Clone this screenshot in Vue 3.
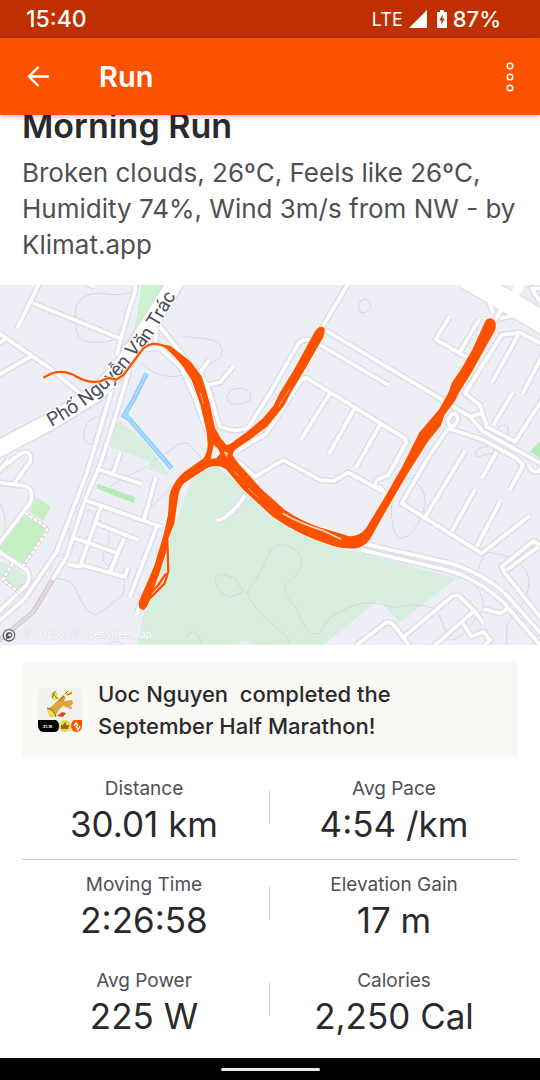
<template>
  <div class="screen">
    <div class="status-bar">
      <span class="clock">15:40</span>
      <span class="network">LTE</span>
      <svg class="signal" viewBox="0 0 18 18" aria-hidden="true">
        <path d="M18 0V18H0Z" fill="#fff" />
      </svg>
      <svg class="battery" viewBox="0 0 10 18" aria-hidden="true">
        <path d="M3 0H7V2H10V18H0V2H3Z" fill="#fff" />
        <path d="M5.500 4L2.500 10.500H4.500V15L7.500 8.500H5.500Z" fill="#bf2f00" />
      </svg>
      <span class="percent">87%</span>
    </div>

    <header class="app-bar">
      <button class="icon-btn" type="button" aria-label="Back">
        <svg width="24" height="24" viewBox="0 0 24 24" fill="none" stroke="#fff" stroke-width="2.400">
          <path d="M12.500 2L3 11.500L12.500 21M3.500 11.500H23" />
        </svg>
      </button>
      <h1 class="bar-title">Run</h1>
      <button class="icon-btn" type="button" aria-label="More options">
        <svg width="10" height="32" viewBox="0 0 10 32" fill="none" stroke="#fff" stroke-width="1.500">
          <circle v-for="cy in [5, 16, 27]" :key="cy" cx="5" :cy="cy" r="2.800" />
        </svg>
      </button>
    </header>

    <main class="content">
      <section class="summary">
        <h2 class="title">Morning Run</h2>
        <p class="description">
          Broken clouds, 26ºC, Feels like 26ºC, Humidity 74%, Wind 3m/s from NW - by Klimat.app
        </p>
      </section>

      <svg class="map" viewBox="0 0 1620 1080" role="img" aria-label="Route map">
        <rect width="1620" height="1080" fill="#eeeef6" />

        <!-- parks and lawns -->
        <path d="M575 585L640 538L700 585L810 700L1010 787L1370 880L1200 1012L1135 945L970 1080H410L440 950L530 700Z" fill="#d7eedf" />
        <path d="M680 1080L735 1067L775 1080Z" fill="#eeeef6" />
        <path d="M350 405L420 455L450 490L510 572L445 553L450 528L330 485Z" fill="#d7eedf" />
        <path d="M-5 825L38 842L80 875L50 925L8 885L-5 880Z" fill="#d7eedf" />
        <path d="M425 0H488L430 115L405 125Z" fill="#cdf2d2" />
        <path d="M110 637L152 665L130 708L88 680Z M70 688L140 730L68 848L-5 795Z" fill="#c3f1c4" />
        <path d="M293 596L406 637L401 655L289 610Z M1620 468L1590 500L1620 520Z" fill="#b4ecb6" />

        <!-- contour lines -->
        <g class="contour">
          <path v-for="d in contours" :key="d" :d="d" />
        </g>

        <g class="road-casing">
          <path v-for="d in roads" :key="d" :d="d" />
        </g>
        <path d="M-20 500L150 410L290 325L360 250L440 130L540 -30" stroke="#dcdde9" stroke-width="58" fill="none" />
        <path d="M1400 -22L1660 130" stroke="#dcdde9" stroke-width="74" fill="none" />
        <g class="road-fill">
          <path v-for="d in roads" :key="d" :d="d" />
        </g>
        <path d="M-20 500L150 410L290 325L360 250L440 130L540 -30" stroke="#fff" stroke-width="48" fill="none" />
        <path d="M1400 -22L1660 130" stroke="#fff" stroke-width="66" fill="none" />
        <path d="M1565 -10L1535 50" stroke="#fff" stroke-width="26" fill="none" />

        <!-- footpaths -->
        <path class="footpath-base" :d="footpath" />
        <path class="footpath-dash" :d="footpath" />
        <path d="M157 885L100 980L-10 1072" stroke="#c9bfc6" stroke-width="14" fill="none" />
        <path d="M157 885L100 980L-10 1072" stroke="#e5dad9" stroke-width="9" fill="none" />

        <!-- canal -->
        <path d="M440 265L400 345L372 392L388 402L515 550" stroke="#85c8f7" stroke-width="14" fill="none" />
        <path d="M440 265L400 345L372 392L388 402L515 550" stroke="#a4d9ff" stroke-width="8" fill="none" />
        <path d="M365 392L386 382L388 402Z" fill="#a4d9ff" />

        <path id="street-line" d="M154 426Q294 350 374 254L456 155L560 -20" fill="none" />
        <text class="street-name"><textPath href="#street-line">Phố Nguyễn Văn Trác</textPath></text>

        <!-- recorded track -->
        <path class="track-halo" :d="track" />
        <path class="loop-halo" :d="loops" />
        <path class="track" :d="track" />
        <path class="loop" :d="loops" />
        <path class="track-gap" d="M850 686Q900 715 970 737L1022 762" stroke-width="5" />
        <path class="track-gap" d="M702 560L718 574M745 610L775 638M602 325L610 355M836 366Q842 350 870 312" stroke-width="2" />
        <path d="M641 480L652 488L661 505L650 519L632 522Z" fill="#eef1ee" />
        <path d="M671 500L684 503L681 517Z" fill="#f8d8c5" />

        <!-- attribution -->
        <circle cx="27" cy="1051" r="17" fill="#fff" stroke="#63656b" stroke-width="4" />
        <path d="M19 1062Q12 1040 29 1041Q39 1043 37 1053Q33 1062 19 1062Z" fill="#5c5e63" />
        <circle cx="29" cy="1050" r="4" fill="#fff" />
        <text class="attribution" x="68" y="1060">© Mapbox © OpenStreetMap</text>
      </svg>

      <section class="details">
        <a class="achievement" href="#">
          <svg class="badge" viewBox="0 0 44 44" aria-hidden="true">
            <rect width="44" height="44" rx="5" fill="#f2f1ec" />
            <path d="M9 21L14 18L20 12L25 7L28 9L26 13L34 12L35 15L31 20L25 18L21 22L17 28L12 29Z" fill="#dda43b" />
            <path d="M9 21Q15 22 18 29L11 28Z M14 5L17 3L19 5L20 11L15 12L13 8Z M27 4L34 3V6L29 8Z" fill="#e9dd48" />
            <path d="M9 20Q16 21 18 29M14 5L20 11M17 3L14 10M21 13L26 8M27 6L30 3M29 7L34 5" stroke="#8a7029" stroke-width="1" fill="none" />
            <path d="M19 28L24 24L28 25L25 29Z M31 21L34 18L33 21Z" fill="#d94a22" />
            <path d="M0 32H18Q21 34 21 38Q21 44 16 44H5Q0 43 0 37Z" fill="#000" />
            <text class="badge-text" x="5" y="40">21.1k</text>
            <circle cx="27" cy="38" r="6" fill="#ead84c" />
            <path d="M23 37H25L27 34L28 35V37H31L30 41H23Z" fill="#9b6910" />
            <path d="M36 32H44V38A5.500 6 0 0 1 33 38Q33 34 36 32Z" fill="#fc5200" />
            <path d="M36 38L38 35L40 38M38 38L40 42L42 38" stroke="#fff" stroke-width="1.400" fill="none" />
          </svg>
          <span class="achievement-text">Uoc Nguyen&nbsp; completed the September Half Marathon!</span>
        </a>

        <dl class="stats">
          <div v-for="stat in stats" :key="stat.label" class="stat">
            <dt>{{ stat.label }}</dt>
            <dd>{{ stat.value }}</dd>
          </div>
        </dl>
      </section>
    </main>

    <footer class="nav-bar">
      <span class="nav-handle"></span>
    </footer>
  </div>
</template>

<script setup>
const stats = [
  { label: 'Distance', value: '30.01 km' },
  { label: 'Avg Pace', value: '4:54 /km' },
  { label: 'Moving Time', value: '2:26:58' },
  { label: 'Elevation Gain', value: '17 m' },
  { label: 'Avg Power', value: '225 W' },
  { label: 'Calories', value: '2,250 Cal' },
];

// every street is drawn twice: a wide casing, then the white surface
const roads = [
  // north west
  'M120 -10L52 130',
  'M250 -10L285 5',
  'M95 53L360 160',
  'M405 -15V20L385 80L350 210',
  'M-10 140L150 250L240 325',
  'M-10 273L95 213',
  'M-10 178L20 160',
  'M335 315L262 560L170 800L75 940L-10 1015',
  'M388 255L345 400L300 540L255 645L200 815L157 885',
  'M-10 560L60 507Q98 490 90 530L40 600',
  'M-10 592L75 603Q105 615 90 655L-10 785',
  'M-10 565L25 525',
  'M-10 795L80 855Q95 875 80 900L-10 985',
  // blocks in the south west
  'M295 553L425 597',
  'M360 503L340 565',
  'M255 645L487 727',
  'M468 577L432 703',
  'M303 665L285 715L240 845L206 838',
  'M290 715L415 765',
  'M215 757L350 803',
  'M372 760L330 860',
  'M245 840L375 876L383 850',
  'M470 725L390 935',
  'M428 925L410 990',
  // centre
  'M480 125L600 275',
  'M470 130L465 175',
  'M430 190L480 190L545 250L585 340L625 450',
  'M628 225L600 262',
  'M700 245L660 292L615 302',
  'M600 262L628 320L660 425Q710 445 745 428L810 325L895 175Q910 160 935 165L1165 300',
  'M690 540L700 505L800 445L900 290Q910 275 925 282L1215 460Q1222 470 1215 480L1165 570L1130 585L1122 605',
  'M690 510L765 575L850 525L960 585L1000 588L1045 563L1150 620',
  'M1120 608L1140 607L1150 620',
  'M988 328L902 465',
  'M1062 373L988 505',
  'M1140 420L1068 547',
  'M1045 -5L965 130',
  'M650 707Q690 700 735 630',
  // north east
  'M975 135L1320 340L1410 395L1450 440L1640 545',
  'M1350 93L1307 163L1400 217',
  'M1438 103L1380 200',
  'M1465 45L1480 85',
  'M1505 70L1475 125',
  'M1550 90L1500 100',
  'M1640 185L1560 143L1505 150L1395 325L1440 360L1460 425L1545 470L1630 340',
  'M1555 150L1475 293',
  'M1630 205L1567 327',
  'M1540 320L1480 420',
  'M1410 395L1445 385',
  'M1620 10H1595L1620 50',
  'M1348 420A11 17 20 1 0 1370 390A11 17 20 1 0 1348 420',
  'M1345 430L1450 465L1550 520L1570 540L1530 613',
  'M1590 545A16 16 0 1 0 1625 540',
  'M1345 430L1280 525L1205 655L1445 805L1588 693',
  'M1395 498L1275 697',
  'M1490 500L1445 580',
  'M1425 613L1355 740',
  'M1502 647L1430 785',
  // south east
  'M1085 775L1350 835Q1450 865 1520 930L1640 1065',
  'M1085 795L1340 855Q1430 880 1510 952L1620 1080',
  'M1620 780L1600 768L1505 845L1515 865L1640 1020',
  'M1520 855L1615 785',
  'M1450 972L1500 985L1525 970',
  'M1210 1057L1355 935Q1372 925 1385 940L1425 980L1450 1015',
  'M1385 1010L1415 1055L1450 1040L1470 1065L1450 1085',
  'M1420 980L1300 1085',
  'M1070 1080L1155 1015Q1168 1008 1180 1018L1230 1085',
];

const contours = [
  'M400 20Q350 35 310 25Q250 20 230 60Q220 110 235 155Q255 180 320 170L360 160',
  'M420 230Q460 275 520 275Q580 270 660 220Q685 170 610 160L550 155',
  'M680 335Q690 305 730 310Q760 320 750 345Q720 365 690 355Z',
  'M250 450Q255 405 290 395Q320 400 305 450Q290 480 265 478Q250 465 250 450Z',
  'M330 605L370 580L440 545M460 530L540 475H565L615 530M440 680L500 620L525 605',
  'M1075 65Q1080 42 1095 42Q1115 45 1110 70Q1095 88 1082 82Z',
  'M210 680L270 675L325 730Q335 770 310 800Q300 835 340 850M150 860L160 820L210 800L205 680',
  'M160 880Q220 880 230 920Q260 990 290 990L370 930L375 880',
  'M645 880Q650 865 670 868L705 880L730 920L695 935Q650 930 645 880Z',
  'M810 795Q790 860 740 922Q760 970 810 1010L865 1060L870 1080',
  'M810 795Q850 760 890 800Q930 840 860 895Q840 920 890 970Q920 1060 960 1045Q980 990 1050 965Q1110 940 1180 968Q1250 950 1300 970Q1330 1000 1340 1060Q1370 1080 1420 1010L1450 970Q1450 930 1430 910Q1430 820 1465 802Q1550 810 1580 860Q1600 900 1565 960L1520 1020V1080',
  'M560 1060Q565 1035 585 1042Q605 1055 600 1080M325 1080Q345 1055 370 1080',
  'M1175 660Q1200 560 1240 585Q1290 620 1270 680Q1240 760 1200 760Q1170 740 1175 660Z',
  'M1425 500Q1440 480 1480 485L1510 490Q1490 505 1450 510Q1430 525 1425 500ZM1485 440Q1500 410 1525 425L1525 460',
  'M0 655Q20 690 15 730M1255 485Q1290 475 1270 510',
];

const footpath = 'M75 683L140 728Q145 740 130 755L68 845M38 835L8 885L60 925';

// outline of the overlapping laps, starting at the north-west corner
const track = [
  'M495 183L530 217L553 245L578 285L603 355L623 440L626 480Q625 505 612 523',
  'L570 552Q540 570 524 600Q511 620 510 645L507 690L495 745L465 845L420 950Q416 970 430 972',
  'L440 960L475 865L497 795L502 760L520 715L530 645Q533 610 550 592L605 556Q645 528 680 550',
  'L730 610L820 693Q900 750 1000 780Q1035 790 1070 787Q1092 782 1107 762',
  'L1150 685L1220 565L1280 470L1320 420L1330 390L1363 345L1375 320L1410 265L1482 135',
  'Q1490 108 1472 103Q1460 102 1454 120L1420 195L1385 255L1358 295L1350 320L1320 375L1260 445',
  'L1210 545L1150 650L1098 735Q1080 757 1050 757L960 730Q900 710 850 675L780 612',
  'L715 540L695 512Q695 495 712 486L750 460L800 422L830 385L850 360L868 325L910 255L967 155',
  'Q974 135 970 130Q958 124 945 145L885 255L842 325L822 365L790 403L740 445L705 470',
  'Q690 482 678 483L660 462L642 430L626 355L612 305L602 275L570 232L510 185Z',
].join('');

const loops = 'M133 277Q180 245 230 275Q265 295 300 289L325 279L350 284L370 270L430 190Q460 165 500 187M502 765L505 860L494 895L435 955M496 868L475 900L433 945';
</script>

<style>
body {
  margin: 0;
  background: #fff;
}
</style>

<style scoped>
.screen {
  display: flex;
  flex-direction: column;
  min-height: 100vh;
  background: #fff;
  color: #2a2a2c;
  font-family: Inter, "Liberation Sans", sans-serif;
}

.status-bar {
  display: flex;
  align-items: center;
  height: 38px;
  padding: 0 39px 0 26px;
  background: #bf2f00;
  color: #fff;
}
.clock {
  flex: 1;
  font-size: 23px;
  font-weight: 500;
}
.network { font-size: 18px; }
.signal {
  width: 18px;
  height: 18px;
  margin-left: 6px;
}
.battery {
  width: 10px;
  height: 18px;
  margin: 0 6px 0 10px;
}
.percent {
  font-size: 22px;
  font-weight: 500;
}

.app-bar {
  position: relative;
  z-index: 1;
  display: flex;
  align-items: center;
  height: 77px;
  padding: 0 20px 0 16px;
  background: #fc5200;
  color: #fff;
  box-shadow: 0 1px 5px rgba(0, 0, 0, 0.3);
}
.icon-btn {
  display: flex;
  padding: 10px;
  border: 0;
  background: none;
  cursor: pointer;
}
.icon-btn:last-child { padding: 10px 5px; }
.bar-title {
  flex: 1;
  margin: 0 0 0 39px;
  font-size: 29px;
  font-weight: 600;
}

.content {
  flex: 1;
  overflow: hidden;
}
.summary { padding: 0 22px 22px; }
.title {
  margin: -9px 0 9px;
  font-size: 34px;
  font-weight: 600;
  line-height: 40px;
}
.description {
  margin: 0;
  color: #505052;
  font-size: 26px;
  line-height: 36px;
}

.map {
  display: block;
  width: 100%;
}
.contour {
  fill: none;
  stroke: #c9cfd3;
  stroke-width: 2;
}
.road-casing,
.road-fill {
  fill: none;
  stroke-linejoin: round;
}
.road-casing {
  stroke: #dcdde9;
  stroke-width: 20;
}
.road-fill {
  stroke: #fff;
  stroke-width: 11;
}
.footpath-base,
.footpath-dash { fill: none; }
.footpath-base {
  stroke: #dccbca;
  stroke-width: 10;
}
.footpath-dash {
  stroke: #fff;
  stroke-width: 7;
  stroke-dasharray: 12 4;
}
.street-name {
  fill: #4c4d58;
  stroke: #fff;
  stroke-width: 8;
  paint-order: stroke;
  font-family: Roboto, sans-serif;
  font-size: 58px;
}
.track {
  fill: #fc5200;
  stroke: #fc5200;
  stroke-width: 6;
  stroke-linejoin: round;
}
.track-halo {
  fill: none;
  stroke: #fff3e6;
  stroke-width: 11;
  stroke-linejoin: round;
}
.loop,
.loop-halo,
.track-gap {
  fill: none;
  stroke-linecap: round;
  stroke-linejoin: round;
}
.loop {
  stroke: #fc5200;
  stroke-width: 7;
}
.loop-halo {
  stroke: #fff3e6;
  stroke-width: 11;
}
.track-gap { stroke: #f8d8c5; }
.attribution {
  fill: #fff;
  stroke: #d3d5df;
  stroke-width: 2;
  paint-order: stroke;
  font-family: Roboto, sans-serif;
  font-size: 30px;
}

.details { padding: 16px 22px 6px; }
.achievement {
  display: flex;
  align-items: center;
  gap: 16px;
  padding: 17px 16px 15px;
  border-radius: 4px;
  background: #f9f8f4;
  color: inherit;
  text-decoration: none;
}
.badge {
  flex: none;
  width: 44px;
  height: 44px;
}
.badge-text {
  fill: #fff;
  font-size: 4px;
  font-weight: 700;
}
.achievement-text {
  max-width: 320px;
  font-size: 22px;
  font-weight: 500;
  line-height: 32px;
}

.stats {
  display: grid;
  grid-template-columns: 1fr 1fr;
  margin: 7px 0 0;
}
.stat {
  position: relative;
  padding: 13px 0 15px;
  border-bottom: 1px solid transparent;
  text-align: center;
}
.stat:nth-child(odd) { padding-right: 4px; }
.stat:nth-child(-n + 2) { border-bottom-color: #cbcbcd; }
.stat:nth-child(odd)::after {
  content: "";
  position: absolute;
  top: 27px;
  right: 0;
  width: 1px;
  height: 33px;
  background: #cbcbcd;
}
.stat dt {
  color: #505052;
  font-size: 19px;
  line-height: 24px;
}
.stat dd {
  margin: 3px 0 0;
  font-size: 35px;
  line-height: 40px;
}

.nav-bar {
  display: flex;
  align-items: center;
  justify-content: center;
  height: 22px;
  background: #000;
}
.nav-handle {
  width: 99px;
  height: 3px;
  border-radius: 2px;
  background: #e8e8e8;
}
</style>
